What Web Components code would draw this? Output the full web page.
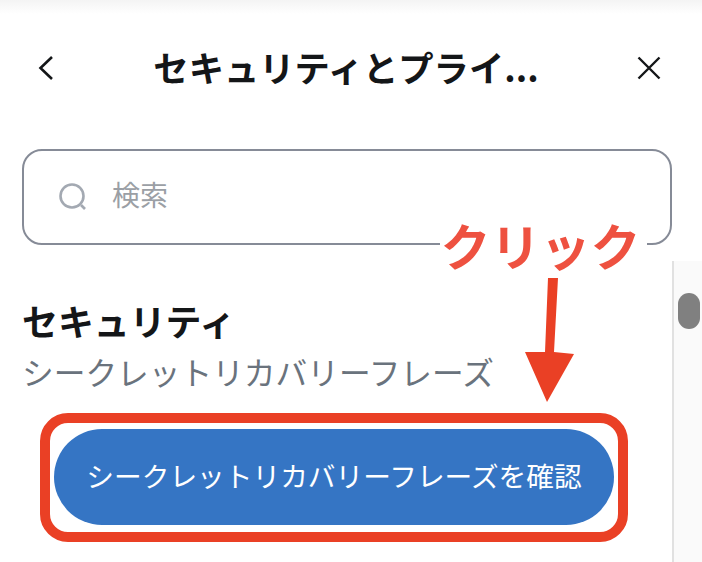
<!DOCTYPE html>
<html lang="ja">
<head>
<meta charset="utf-8">
<title>セキュリティとプライバシー</title>
<style>
  html, body { margin: 0; padding: 0; background: #fff; }
  body { width: 702px; height: 562px; overflow: hidden; font-family: "Noto Sans CJK JP", "Liberation Sans", sans-serif; }
</style>
</head>
<body>
<settings-screen>
  <nav-header>セキュリティとプライ...</nav-header>
  <search-field placeholder="検索"></search-field>
  <setting-section heading="セキュリティ" sub="シークレットリカバリーフレーズ">
    <reveal-button>シークレットリカバリーフレーズを確認</reveal-button>
  </setting-section>
</settings-screen>
<click-callout>クリック</click-callout>

<script>
class SettingsScreen extends HTMLElement {
  constructor(){
    super();
    this.attachShadow({mode: 'open'});
    this.shadowRoot.innerHTML = `
    <style>
      :host {
        display: block;
        position: relative;
        width: 702px;
        height: 562px;
        overflow: hidden;
        background: #fff;
      }
      .shade {
        height: 14px;
        background: linear-gradient(#f4f4f4, #fff);
      }
      .content {
        padding: 26px 30px 0 22px;
      }
      .track {
        position: absolute;
        left: 672px;
        top: 261px;
        width: 30px;
        bottom: 0;
        box-sizing: border-box;
        border-left: 2px solid #e1e1e1;
        background: #fafafa;
      }
      .thumb {
        position: absolute;
        left: 4px;
        top: 32px;
        width: 22px;
        height: 36px;
        border-radius: 11px;
        background: #808080;
      }
    </style>
    <div class="shade"></div>
    <div class="content"><slot></slot></div>
    <div class="track"><div class="thumb"></div></div>
    `;
  }
}

class NavHeader extends HTMLElement {
  constructor(){
    super();
    this.attachShadow({mode: 'open'});
    this.shadowRoot.innerHTML = `
    <style>
      :host {
        display: flex;
        align-items: center;
        justify-content: space-between;
        height: 56px;
        padding: 0 11px 0 15px;
        color: #141618;
      }
      svg { display: block; flex: none; }
      .title {
        margin-bottom: 2px;
        font-size: 35.3px;
        font-weight: 700;
        line-height: 54px;
        white-space: nowrap;
      }
    </style>
    <svg width="18" height="26" viewBox="0 0 18 26" fill="none" stroke="#141618" stroke-width="2.6">
      <path d="M15 2 L3.5 13 L15 24"/>
    </svg>
    <div class="title"><slot></slot></div>
    <svg width="24" height="24" viewBox="0 0 24 24" fill="none" stroke="#141618" stroke-width="2.4">
      <path d="M1.5 1.5 L22.5 22.5 M22.5 1.5 L1.5 22.5"/>
    </svg>
    `;
  }
}

class SearchField extends HTMLElement {
  constructor(){
    super();
    this.attachShadow({mode: 'open'});
    this.shadowRoot.innerHTML = `
    <style>
      :host {
        display: flex;
        align-items: center;
        gap: 25px;
        box-sizing: border-box;
        width: 650px;
        height: 96px;
        margin-top: 53px;
        padding: 0 0 0 35px;
        border: 2px solid #868b97;
        border-radius: 20px;
        color: #9b9fa5;
        font-size: 28px;
      }
      svg { display: block; flex: none; }
      .label { margin-bottom: 6px; }
    </style>
    <svg width="28" height="28" viewBox="0 0 28 28" fill="none" stroke="#a3a9b2" stroke-width="2.6">
      <circle cx="13" cy="13" r="11.5"/>
      <path d="M22 22 L26 26"/>
    </svg>
    <span class="label"></span>
    `;
    this.shadowRoot.querySelector('.label').textContent = this.getAttribute('placeholder');
  }
}

class SettingSection extends HTMLElement {
  constructor(){
    super();
    this.attachShadow({mode: 'open'});
    this.shadowRoot.innerHTML = `
    <style>
      :host {
        display: block;
        margin-top: 50px;
      }
      h2 {
        margin: 0 0 1px;
        font-size: 35.9px;
        font-weight: 700;
        line-height: 50px;
        color: #141618;
      }
      p {
        margin: 0;
        font-size: 31.7px;
        line-height: 50px;
        color: #6a737d;
        white-space: nowrap;
      }
      .action { margin-top: 17px; padding-left: 18px; }
    </style>
    <h2></h2>
    <p></p>
    <div class="action"><slot></slot></div>
    `;
    this.shadowRoot.querySelector('h2').textContent = this.getAttribute('heading');
    this.shadowRoot.querySelector('p').textContent = this.getAttribute('sub');
  }
}

class RevealButton extends HTMLElement {
  constructor(){
    super();
    this.attachShadow({mode: 'open'});
    this.shadowRoot.innerHTML = `
    <style>
      :host {
        display: block;
        box-sizing: border-box;
        width: 588px;
        height: 129px;
        padding: 6px 4px;
        border: 10px solid #ea4025;
        border-radius: 28px;
      }
      .pill {
        display: flex;
        align-items: center;
        justify-content: center;
        box-sizing: border-box;
        height: 96px;
        padding-bottom: 4px;
        border-radius: 48px;
        background: #3575c4;
        color: #fff;
        font-size: 27.7px;
        white-space: nowrap;
      }
    </style>
    <div class="pill"><slot></slot></div>
    `;
  }
}

class ClickCallout extends HTMLElement {
  constructor(){
    super();
    this.attachShadow({mode: 'open'});
    this.shadowRoot.innerHTML = `
    <style>
      :host {
        position: absolute;
        left: 440px;
        top: 218px;
        width: 207px;
        height: 192px;
      }
      .label {
        display: block;
        box-sizing: border-box;
        width: 207px;
        height: 52px;
        padding-right: 6px;
        background: #fff;
        color: #ee5140;
        font-size: 50px;
        font-weight: 700;
        line-height: 52px;
        text-align: center;
        white-space: nowrap;
      }
      svg { position: absolute; left: 0; top: 0; }
    </style>
    <span class="label"><slot></slot></span>
    <svg width="207" height="192" viewBox="0 0 207 192">
      <path d="M108 60 L118 60 L114 134 L134 136 L107 184 L85 134 L105 134 Z" fill="#ea4025"/>
    </svg>
    `;
  }
}

customElements.define('settings-screen', SettingsScreen);
customElements.define('nav-header', NavHeader);
customElements.define('search-field', SearchField);
customElements.define('setting-section', SettingSection);
customElements.define('reveal-button', RevealButton);
customElements.define('click-callout', ClickCallout);
</script>
</body>
</html>
